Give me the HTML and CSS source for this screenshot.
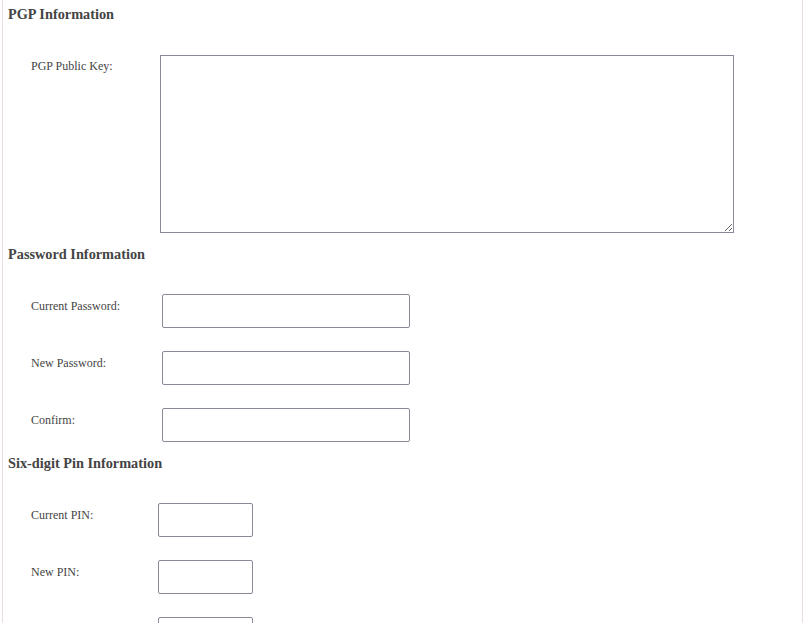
FILE: index.html
```html
<!DOCTYPE html>
<html>
<head>
<meta charset="utf-8">
<link rel="stylesheet" href="styles.css">
</head>
<body>
<div class="panel">
  <section class="sec sec-pgp">
    <h3 class="sec-title">PGP Information</h3>
    <div class="rows">
      <div class="row">
        <label class="lbl lbl-top">PGP Public Key:</label>
        <textarea class="key"></textarea>
      </div>
    </div>
  </section>
  <section class="sec sec-pass">
    <h3 class="sec-title">Password Information</h3>
    <div class="rows">
      <div class="row"><label class="lbl">Current Password:</label><input class="txt" type="password"></div>
      <div class="row"><label class="lbl">New Password:</label><input class="txt" type="password"></div>
      <div class="row"><label class="lbl">Confirm:</label><input class="txt" type="password"></div>
    </div>
  </section>
  <section class="sec sec-pin">
    <h3 class="sec-title">Six-digit Pin Information</h3>
    <div class="rows">
      <div class="row"><label class="lbl">Current PIN:</label><input class="pin" type="password"></div>
      <div class="row"><label class="lbl">New PIN:</label><input class="pin" type="password"></div>
      <div class="row"><label class="lbl">Confirm:</label><input class="pin" type="password"></div>
    </div>
  </section>
</div>
</body>
</html>
```
FILE: styles.css
```css
html, body {
  margin: 0;
  padding: 0;
  background: #ffffff;
}
body {
  font-family: "Liberation Serif", "Times New Roman", serif;
  color: #444444;
}
.panel {
  margin: 0 2px;
  border-left: 1px solid #e9dde1;
  border-right: 1px solid #e9dde1;
  padding: 6px 5px 40px;
}
.sec-title {
  margin: 0;
  padding-top: 1px;
  font-size: 14.3px;
  line-height: 15px;
  font-weight: bold;
  color: #444444;
}
.sec { margin-top: 13px; }
.sec-pgp { margin-top: 0; }
.sec-pin { margin-top: 13px; }
.rows {
  display: flex;
  flex-direction: column;
  gap: 23px;
  margin-top: 32px;
  padding-left: 23px;
}
.sec-pgp .rows { margin-top: 33px; }
.sec-pin .rows { margin-top: 32px; }
.row {
  display: flex;
  align-items: flex-start;
}
.lbl {
  font-size: 12px;
  line-height: 14px;
  padding-top: 5px;
  color: #444444;
  flex: none;
}
.lbl-top { padding-top: 4px; }
.sec-pgp .lbl { width: 129px; }
.sec-pass .lbl { width: 131px; }
.sec-pin .lbl { width: 127px; }
.key {
  box-sizing: border-box;
  width: 574px;
  height: 178px;
  margin: 0;
  border: 1px solid #8b8899;
  border-radius: 0;
  padding: 2px;
  resize: both;
  background: #fff;
}
.txt, .pin {
  box-sizing: border-box;
  height: 34px;
  margin: 0;
  border: 1px solid #8b8899;
  border-radius: 2px;
  padding: 2px 4px;
  background: #fff;
}
.txt { width: 248px; }
.pin { width: 95px; }
```
